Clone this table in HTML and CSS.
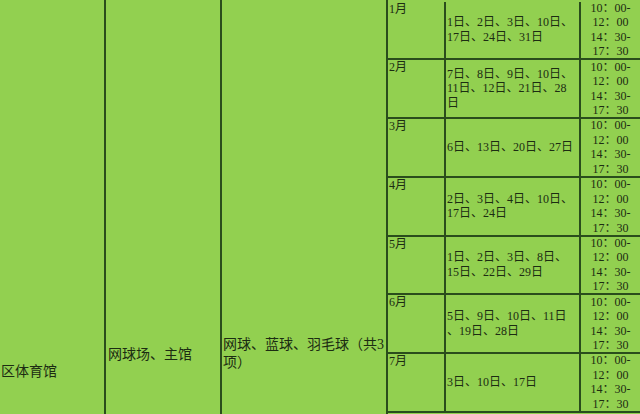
FILE: index.html
```html
<!DOCTYPE html>
<html lang="zh">
<head>
<meta charset="utf-8">
<link rel="stylesheet" href="styles.css">
</head>
<body>
<div class="sheet">
  <div class="col venue"><span class="venue-text">区体育馆</span></div>
  <div class="col place"><span class="place-text">网球场、主馆</span></div>
  <div class="col sports"><span class="sports-text">网球、蓝球、羽毛球（共3<br>项）</span></div>
  <div class="months">
    <div class="row">
      <div class="month">1月</div>
      <div class="days">1日、2日、3日、10日、<br>17日、24日、31日</div>
      <div class="time">10：00-<br>12：00<br>14：30-<br>17：30</div>
    </div>
    <div class="row">
      <div class="month">2月</div>
      <div class="days">7日、8日、9日、10日、<br>11日、12日、21日、28<br>日</div>
      <div class="time">10：00-<br>12：00<br>14：30-<br>17：30</div>
    </div>
    <div class="row">
      <div class="month">3月</div>
      <div class="days">6日、13日、20日、27日</div>
      <div class="time">10：00-<br>12：00<br>14：30-<br>17：30</div>
    </div>
    <div class="row">
      <div class="month">4月</div>
      <div class="days">2日、3日、4日、10日、<br>17日、24日</div>
      <div class="time">10：00-<br>12：00<br>14：30-<br>17：30</div>
    </div>
    <div class="row">
      <div class="month">5月</div>
      <div class="days">1日、2日、3日、8日、<br>15日、22日、29日</div>
      <div class="time">10：00-<br>12：00<br>14：30-<br>17：30</div>
    </div>
    <div class="row">
      <div class="month">6月</div>
      <div class="days">5日、9日、10日、11日<br>、19日、28日</div>
      <div class="time">10：00-<br>12：00<br>14：30-<br>17：30</div>
    </div>
    <div class="row">
      <div class="month">7月</div>
      <div class="days">3日、10日、17日</div>
      <div class="time">10：00-<br>12：00<br>14：30-<br>17：30</div>
    </div>
  </div>
</div>
</body>
</html>
```

FILE: styles.css
```css
html, body {
  margin: 0;
  padding: 0;
  width: 640px;
  height: 414px;
  overflow: hidden;
  background: #92d050;
}

.sheet {
  display: flex;
  height: 430px;
  color: #1c2c12;
  font-family: "Liberation Serif", "Noto Sans CJK SC", serif;
}

.col {
  flex: none;
  box-sizing: border-box;
  border-right: 2px solid #2a4d1c;
  font-size: 14px;
  line-height: 18px;
}

.venue {
  width: 106px;
  padding: 363px 0 0 1px;
}

.place {
  width: 116px;
  padding: 346px 0 0 2px;
}

.sports {
  width: 166px;
  padding: 336px 0 0 1px;
  white-space: nowrap;
  overflow: hidden;
}

.months {
  flex: 1;
  display: flex;
  flex-direction: column;
  padding-top: 1.5px;
  font-size: 12px;
}

.row {
  display: flex;
  flex: none;
  height: 58.75px;
  box-sizing: border-box;
  border-bottom: 2px solid #2a4d1c;
}

.month {
  flex: none;
  width: 58px;
  box-sizing: border-box;
  border-right: 2px solid #2a4d1c;
  padding: 0 0 0 1px;
  line-height: 15px;
}

.days {
  flex: none;
  width: 135px;
  box-sizing: border-box;
  border-right: 2px solid #2a4d1c;
  padding-left: 1px;
  display: flex;
  align-items: center;
  line-height: 14.5px;
  white-space: nowrap;
}

.time {
  flex: 1;
  display: flex;
  flex-direction: column;
  justify-content: center;
  text-align: center;
  line-height: 14.5px;
  white-space: nowrap;
}
```
